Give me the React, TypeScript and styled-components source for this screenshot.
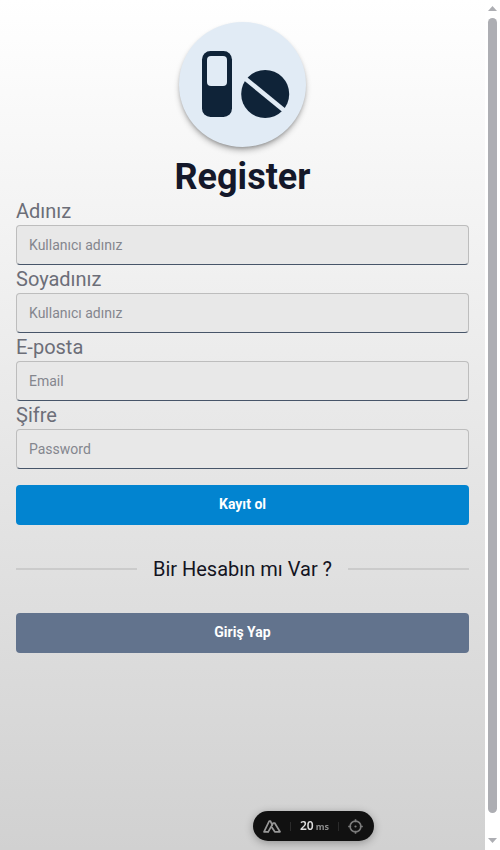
import React from "react";
import styled, { createGlobalStyle } from "styled-components";

const GlobalStyle = createGlobalStyle`
  *, *::before, *::after { box-sizing: border-box; }
  html, body { margin: 0; padding: 0; background: #fff; overflow: hidden; }
  body { font-family: Roboto, "Open Sans", sans-serif; color: #14141f; }
`;

const Page = styled.div`
  display: flex;
  width: 500px;
  height: 850px;
`;

const Screen = styled.main`
  width: 485px;
  height: 850px;
  padding: 22px 16px 0;
  display: flex;
  flex-direction: column;
  background: linear-gradient(to bottom, #fff, #d1d1d1);
`;

const Logo = styled.div`
  align-self: center;
  width: 127px;
  height: 125px;
  border-radius: 50%;
  background: #e1ebf5;
  box-shadow: 0 4px 6px -1px rgba(0, 0, 0, 0.3), 0 2px 4px -2px rgba(0, 0, 0, 0.3);

  svg { display: block; }
`;

const Title = styled.h1`
  margin: 10px 0 0;
  font-size: 36px;
  line-height: 40px;
  font-weight: 700;
  text-align: center;
  color: #14182a;
`;

const Form = styled.form`
  display: flex;
  flex-direction: column;
`;

const Field = styled.label`
  display: flex;
  flex-direction: column;
  font-size: 20px;
  line-height: 28px;
  color: #6c6e78;
`;

const Input = styled.input`
  width: 100%;
  height: 40px;
  padding: 0 12px;
  border: 1px solid #bdbdbd;
  border-bottom-color: #475569;
  border-radius: 4px;
  background: #e8e8e8;
  font: 14px/20px Roboto, sans-serif;
  outline: none;

  &::placeholder { color: #84868e; opacity: 1; }
`;

const Button = styled.button<{ $color: string }>`
  width: 100%;
  height: 40px;
  padding: 0 0 2px;
  border: 0;
  border-radius: 4px;
  background: ${({ $color }) => $color};
  color: #fff;
  font: 700 14px/20px Roboto, sans-serif;
`;

const Submit = styled(Button)`
  margin-top: 16px;
`;

const Divider = styled.div`
  display: flex;
  align-items: center;
  gap: 16px;
  height: 16px;
  margin: 36px 0;
  font-size: 20px;
  line-height: 28px;
  white-space: nowrap;

  &::before, &::after {
    content: "";
    flex: 1;
    height: 2px;
    background: #cbcbcb;
  }
`;

const Scrollbar = styled.div`
  width: 15px;
  display: flex;
  flex-direction: column;
  align-items: flex-start;
  padding: 6px 0 6px 3px;
  background: #fff;

  svg { display: block; flex: none; }
`;

const Thumb = styled.div`
  width: 9px;
  height: 795px;
  margin: 7px 0 25px;
  border-radius: 5px;
  background: #adaeb3;
`;

const TimingBadge = styled.div`
  position: fixed;
  left: 253px;
  top: 811px;
  width: 121px;
  height: 30px;
  padding: 0 11px 0 10px;
  display: flex;
  align-items: center;
  justify-content: space-between;
  border-radius: 15px;
  background: #111;
  box-shadow: 0 2px 8px rgba(0, 0, 0, 0.3);
  color: #dedede;

  svg { display: block; }
`;

const Separator = styled.span`
  width: 1px;
  height: 9px;
  background: #2b2b2b;
`;

const Timing = styled.span`
  display: flex;
  align-items: baseline;
  gap: 2px;
  font: 600 12px/16px "Noto Sans", sans-serif;

  small { font-size: 9px; font-weight: 700; color: #8c8c8c; }
`;

const fields = [
  { label: "Adınız", placeholder: "Kullanıcı adınız", type: "text" },
  { label: "Soyadınız", placeholder: "Kullanıcı adınız", type: "text" },
  { label: "E-posta", placeholder: "Email", type: "email" },
  { label: "Şifre", placeholder: "Password", type: "password" },
];

const PillsIcon = () => (
  <svg width="127" height="125" viewBox="0 0 127 125" fill="#0f2338">
    <rect x="23" y="29" width="30" height="66" rx="8.5" />
    <rect x="28" y="34" width="20" height="30" rx="4" fill="#e1ebf5" />
    <circle cx="86.2" cy="72" r="24" />
    <path d="M64.9 55.5 108.9 91.5" stroke="#e1ebf5" strokeWidth="4.6" />
  </svg>
);

const MountainsIcon = () => (
  <svg width="18" height="13" viewBox="0 0 18 13" fill="none" stroke="#989898" strokeWidth="1.7" strokeLinejoin="round" strokeLinecap="round">
    <path d="M5 11.8H1L6.2 1.2h1.3L9.2 5" />
    <path d="M5.2 11.8 10.2 3h1.5L17 11.8h-5.2L9 7.5" />
  </svg>
);

const TargetIcon = () => (
  <svg width="15" height="15" viewBox="0 0 15 15" fill="none" stroke="#7c7c7c" strokeWidth="1.6">
    <circle cx="7.5" cy="7.5" r="5.4" />
    <path d="M7.5 .2V3.2M7.5 11.8v3M.2 7.5H3.2M11.8 7.5h3" />
    <circle cx="7.5" cy="7.5" r="1.1" fill="#7c7c7c" stroke="none" />
  </svg>
);

export default function App() {
  return (
    <>
      <GlobalStyle />
      <Page>
        <Screen>
          <Logo><PillsIcon /></Logo>
          <Title>Register</Title>
          <Form onSubmit={(e) => e.preventDefault()}>
            {fields.map((f) => (
              <Field key={f.label}>
                {f.label}
                <Input type={f.type} placeholder={f.placeholder} />
              </Field>
            ))}
            <Submit $color="#0284d0">Kayıt ol</Submit>
          </Form>
          <Divider>Bir Hesabın mı Var ?</Divider>
          <Button $color="#62738d">Giriş Yap</Button>
        </Screen>
        <Scrollbar>
          <svg width="9" height="5" viewBox="0 0 9 5" fill="#adaeb3"><path d="M4.5 0 9 5H0z" /></svg>
          <Thumb />
          <svg width="9" height="5" viewBox="0 0 9 5" fill="#adaeb3"><path d="M0 0h9L4.5 5z" /></svg>
        </Scrollbar>
      </Page>
      <TimingBadge>
        <MountainsIcon />
        <Separator />
        <Timing>20<small>ms</small></Timing>
        <Separator />
        <TargetIcon />
      </TimingBadge>
    </>
  );
}
